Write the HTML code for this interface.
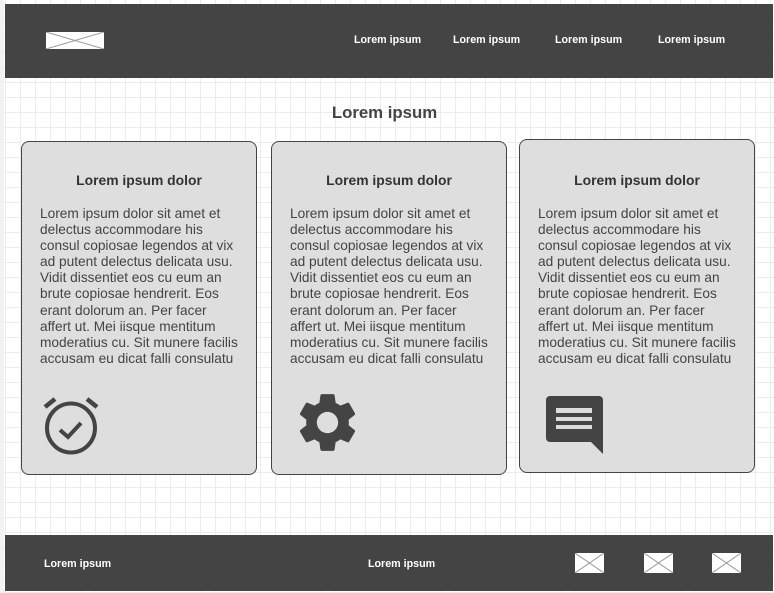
<!DOCTYPE html>
<html><head><style>
body{margin:0;width:774px;height:593px;position:relative;overflow:hidden;font-family:"Liberation Sans",sans-serif;
background-color:#fff;
background-image:linear-gradient(#ececec 1px,transparent 1px),linear-gradient(90deg,#ececec 1px,transparent 1px);
background-size:15px 15px;background-position:5px 7px;}
.strip{position:absolute;left:0;top:0;width:4px;height:593px;background:#f2f2f2}
.hdr{position:absolute;left:5px;top:4px;width:768px;height:74px;background:#444}
.ftr{position:absolute;left:5px;top:535px;width:768px;height:56px;background:#444}
.w{position:absolute;color:#fff;font-weight:bold;font-size:10.7px}
.img{position:absolute;background:#fff}
h1{position:absolute;top:103px;left:0;width:769px;text-align:center;font-size:16.8px;color:#444;margin:0}
.card{position:absolute;width:236px;height:334px;background:#dedede;border:1px solid #444;border-radius:8px;box-sizing:border-box}
.card h2{margin:0;position:absolute;top:30px;left:0;width:100%;text-align:center;font-size:13.9px;color:#333}
.card p{margin:0;position:absolute;top:64px;left:18px;width:200px;font-size:13.7px;line-height:16.1px;color:#444}
.card svg.ic{position:absolute}
</style></head><body>
<div class="strip"></div>
<div class="hdr">
<svg class="img" style="left:41px;top:28px" width="58" height="17"><rect width="58" height="17" fill="#fff"/><path d="M0 0L58 17M58 0L0 17" stroke="#999" stroke-width="1"/></svg>
<span class="w" style="left:349px;top:30px">Lorem ipsum</span>
<span class="w" style="left:448px;top:30px">Lorem ipsum</span>
<span class="w" style="left:550px;top:30px">Lorem ipsum</span>
<span class="w" style="left:653px;top:30px">Lorem ipsum</span>
</div>
<h1>Lorem ipsum</h1>
<div class="card" style="left:21px;top:141px"><h2>Lorem ipsum dolor</h2><p>Lorem ipsum dolor sit amet et delectus accommodare his consul copiosae legendos at vix ad putent delectus delicata usu. Vidit dissentiet eos cu eum an brute copiosae hendrerit. Eos erant dolorum an. Per facer affert ut. Mei iisque mentitum moderatius cu. Sit munere facilis accusam eu dicat falli consulatu</p>
<svg class="ic" style="left:20px;top:253px" width="60" height="60" viewBox="0 0 60 60"><g stroke="#444" stroke-width="4" fill="none"><ellipse cx="29" cy="33" rx="24" ry="24.5"/><path d="M18 35l8 7 13-14"/><path d="M3 12l10-8M55 12l-10-8" stroke-width="4.5"/></g></svg>
</div>
<div class="card" style="left:271px;top:141px"><h2>Lorem ipsum dolor</h2><p>Lorem ipsum dolor sit amet et delectus accommodare his consul copiosae legendos at vix ad putent delectus delicata usu. Vidit dissentiet eos cu eum an brute copiosae hendrerit. Eos erant dolorum an. Per facer affert ut. Mei iisque mentitum moderatius cu. Sit munere facilis accusam eu dicat falli consulatu</p>
<svg class="ic" style="left:20px;top:245px" width="71" height="71" viewBox="0 0 24 24"><path fill="#444" d="M19.14 12.94c.04-.3.06-.61.06-.94 0-.32-.02-.64-.07-.94l2.03-1.58a.49.49 0 0 0 .12-.61l-1.920-3.32a.488.488 0 0 0-.59-.22l-2.39.96c-.5-.38-1.03-.7-1.62-.94l-.36-2.54a.484.484 0 0 0-.48-.41h-3.840c-.24 0-.43.17-.47.41l-.36 2.54c-.59.24-1.13.57-1.62.94l-2.39-.96c-.22-.08-.47 0-.59.22L2.74 8.87c-.12.21-.08.47.12.61l2.03 1.58c-.05.3-.09.63-.09.94s.02.64.07.94l-2.03 1.58a.49.49 0 0 0-.12.61l1.92 3.32c.12.22.37.29.59.22l2.39-.96c.5.38 1.03.7 1.62.94l.36 2.54c.05.24.24.41.48.41h3.84c.24 0 .44-.17.47-.41l.36-2.54c.59-.24 1.13-.56 1.62-.94l2.39.96c.22.08.47 0 .59-.22l1.92-3.32c.12-.22.07-.47-.12-.61l-2.010-1.58zM12 15.6c-1.98 0-3.6-1.62-3.6-3.6s1.62-3.6 3.6-3.6 3.6 1.62 3.6 3.6-1.620 3.6-3.6 3.6z"/></svg>
</div>
<div class="card" style="left:519px;top:139px"><h2 style="top:32px">Lorem ipsum dolor</h2><p style="top:66px">Lorem ipsum dolor sit amet et delectus accommodare his consul copiosae legendos at vix ad putent delectus delicata usu. Vidit dissentiet eos cu eum an brute copiosae hendrerit. Eos erant dolorum an. Per facer affert ut. Mei iisque mentitum moderatius cu. Sit munere facilis accusam eu dicat falli consulatu</p>
<svg class="ic" style="left:25px;top:256px" width="60" height="58" viewBox="0 0 60 58"><path fill="#444" d="M5 0h49a4 4 0 0 1 4 4v54l-12-12H5a4 4 0 0 1-4-4V4a4 4 0 0 1 4-4z"/><g fill="#ddd"><rect x="11" y="12" width="36" height="5"/><rect x="11" y="21" width="36" height="4"/><rect x="11" y="29" width="36" height="4"/></g></svg>
</div>
<div class="ftr">
<span class="w" style="left:39px;top:23px">Lorem ipsum</span>
<span class="w" style="left:363px;top:23px">Lorem ipsum</span>
<svg class="img" style="left:570px;top:18px" width="29" height="20"><rect width="29" height="20" fill="#fff"/><path d="M0 0L29 20M29 0L0 20" stroke="#999"/></svg>
<svg class="img" style="left:639px;top:18px" width="29" height="20"><rect width="29" height="20" fill="#fff"/><path d="M0 0L29 20M29 0L0 20" stroke="#999"/></svg>
<svg class="img" style="left:707px;top:18px" width="29" height="20"><rect width="29" height="20" fill="#fff"/><path d="M0 0L29 20M29 0L0 20" stroke="#999"/></svg>
</div>
</body></html>
